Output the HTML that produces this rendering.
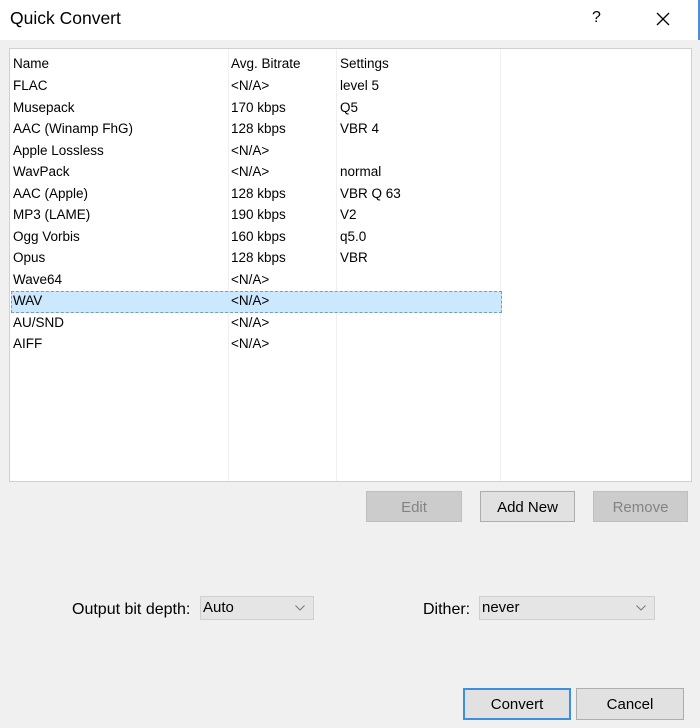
<!DOCTYPE html><html><head><style>
body{margin:0;width:700px;height:728px;background:#f0f0f0;font-family:"Liberation Sans",sans-serif;font-size:14px;color:#000;position:relative;overflow:hidden}
.a{position:absolute}
.title{left:0;top:0;width:698px;height:40px;background:#fff;border-right:2px solid #4a90d9}
.list{left:9px;top:48px;width:681px;height:432px;background:#fff;border:1px solid #d0d0d0}
.col{position:absolute;top:0;height:432px;width:1px;background:#f0f0f0}
.row{position:absolute;left:0;height:21px;line-height:21px;white-space:nowrap;font-size:13.5px}
.row span{position:absolute}
.btn{position:absolute;height:31px;line-height:31px;text-align:center;background:#e1e1e1;border:1px solid #adadad;box-sizing:border-box;font-size:15px}
.dis{background:#cccccc;border-color:#bfbfbf;color:#838383}
.combo{position:absolute;height:24px;line-height:22px;background:#e5e5e5;border:1px solid #cfcfcf;box-sizing:border-box;padding-left:2px;font-size:15px}
.combo svg{position:absolute;right:8px;top:8px}
.lbl{font-size:16px}
</style></head><body>
<div class="a title"><span class="a" style="left:10px;top:8px;font-size:17.5px">Quick Convert</span>
<span class="a" style="left:592px;top:9px;font-size:16px">?</span>
<svg class="a" style="left:656px;top:12px" width="14" height="14"><path d="M1 1L13 13M13 1L1 13" stroke="#000" stroke-width="1.3"/></svg></div>
<div class="a list">
<div class="col" style="left:218px"></div><div class="col" style="left:326px"></div><div class="col" style="left:490px"></div>
<div class="a" style="left:1px;top:242px;width:489px;height:20px;background:#cce8ff;border:1px dashed #7a9ab8"></div>
</div>
<div class="a" style="left:13px;top:53px">
<div class="row" style="top:0"><span style="left:0">Name</span><span style="left:218px">Avg. Bitrate</span><span style="left:327px">Settings</span></div>
<div class="row" style="top:22px"><span style="left:0">FLAC</span><span style="left:218px">&lt;N/A&gt;</span><span style="left:327px">level 5</span></div>
<div class="row" style="top:43.5px"><span style="left:0">Musepack</span><span style="left:218px">170 kbps</span><span style="left:327px">Q5</span></div>
<div class="row" style="top:65px"><span style="left:0">AAC (Winamp FhG)</span><span style="left:218px">128 kbps</span><span style="left:327px">VBR 4</span></div>
<div class="row" style="top:86.5px"><span style="left:0">Apple Lossless</span><span style="left:218px">&lt;N/A&gt;</span></div>
<div class="row" style="top:108px"><span style="left:0">WavPack</span><span style="left:218px">&lt;N/A&gt;</span><span style="left:327px">normal</span></div>
<div class="row" style="top:129.5px"><span style="left:0">AAC (Apple)</span><span style="left:218px">128 kbps</span><span style="left:327px">VBR Q 63</span></div>
<div class="row" style="top:151px"><span style="left:0">MP3 (LAME)</span><span style="left:218px">190 kbps</span><span style="left:327px">V2</span></div>
<div class="row" style="top:172.5px"><span style="left:0">Ogg Vorbis</span><span style="left:218px">160 kbps</span><span style="left:327px">q5.0</span></div>
<div class="row" style="top:194px"><span style="left:0">Opus</span><span style="left:218px">128 kbps</span><span style="left:327px">VBR</span></div>
<div class="row" style="top:215.5px"><span style="left:0">Wave64</span><span style="left:218px">&lt;N/A&gt;</span></div>
<div class="row" style="top:237px"><span style="left:0">WAV</span><span style="left:218px">&lt;N/A&gt;</span></div>
<div class="row" style="top:258.5px"><span style="left:0">AU/SND</span><span style="left:218px">&lt;N/A&gt;</span></div>
<div class="row" style="top:280px"><span style="left:0">AIFF</span><span style="left:218px">&lt;N/A&gt;</span></div>
</div>
<div class="btn dis" style="left:366px;top:491px;width:96px">Edit</div>
<div class="btn" style="left:480px;top:491px;width:95px">Add New</div>
<div class="btn dis" style="left:593px;top:491px;width:95px">Remove</div>
<span class="a lbl" style="left:72px;top:601px">Output bit depth:</span>
<div class="combo" style="left:200px;top:596px;width:114px">Auto<svg width="10" height="6"><path d="M0.5 0.5L5 5L9.5 0.5" fill="none" stroke="#777"/></svg></div>
<span class="a lbl" style="left:423px;top:601px">Dither:</span>
<div class="combo" style="left:479px;top:596px;width:176px">never<svg width="10" height="6"><path d="M0.5 0.5L5 5L9.5 0.5" fill="none" stroke="#777"/></svg></div>
<div class="btn" style="left:463px;top:688px;width:108px;height:32px;line-height:30px;border:2px solid #3c8ee0">Convert</div>
<div class="btn" style="left:576px;top:688px;width:108px;height:32px;line-height:32px">Cancel</div>
</body></html>
